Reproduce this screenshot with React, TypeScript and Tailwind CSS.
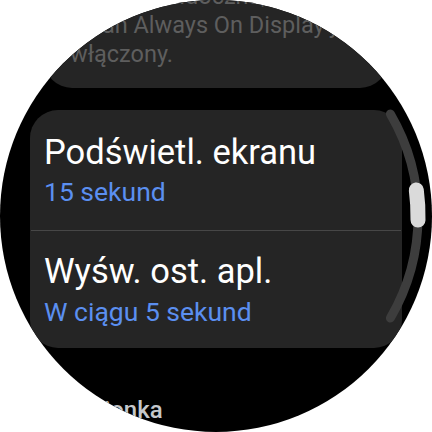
import React from "react";

export default function App() {
  return (
    <div className="w-[432px] h-[432px] bg-white">
      <div
        className="relative w-[432px] h-[432px] rounded-full bg-black overflow-hidden"
        style={{ fontFamily: "Roboto, 'Noto Sans', sans-serif" }}
      >
        <div className="flex flex-col items-center">
          <div className="-mt-[38px] w-[344px] rounded-[28px] bg-[#252525] pt-[20px] pb-[19px] pl-[26px] text-[23.5px] leading-[29px] text-[#5e5e5e]">
            <div className="whitespace-nowrap">Godzina widoczna, gdy</div>
            <div className="whitespace-nowrap">ekran Always On Display jest</div>
            <div className="whitespace-nowrap">włączony.</div>
          </div>

          <div className="mt-[22px] w-[372px] rounded-[28px] bg-[#252525] flex flex-col">
            <div className="pt-[22px] pb-[23px] pl-[14px] flex flex-col">
              <div className="text-[34.5px] leading-[40px] text-white whitespace-nowrap">Podświetl. ekranu</div>
              <div className="mt-[5px] text-[26.5px] leading-[30px] text-[#5b8ff0] whitespace-nowrap">15 sekund</div>
            </div>
            <div className="h-px mx-[1px] bg-[#474747]" />
            <div className="pt-[20px] pb-[21px] pl-[14px] flex flex-col">
              <div className="text-[34.5px] leading-[40px] text-white whitespace-nowrap">Wyśw. ost. apl.</div>
              <div className="mt-[6px] text-[26.5px] leading-[30px] text-[#5b8ff0] whitespace-nowrap">W ciągu 5 sekund</div>
            </div>
          </div>

          <div className="self-start ml-[64px] mt-[48px] text-[24px] leading-[28px] font-medium text-[#c5c8cc] whitespace-nowrap">
            Czcionka
          </div>
        </div>

        <svg className="absolute inset-0 pointer-events-none" width="432" height="432" viewBox="0 0 432 432">
          <path
            d="M 390.4 114 A 202 202 0 0 1 390.4 318"
            fill="none"
            stroke="#3d3d3d"
            strokeWidth="9"
            strokeLinecap="round"
          />
          <path
            d="M 416.3 190 A 202 202 0 0 1 418 220"
            fill="none"
            stroke="#dadada"
            strokeWidth="15"
            strokeLinecap="round"
          />
        </svg>
      </div>
    </div>
  );
}
